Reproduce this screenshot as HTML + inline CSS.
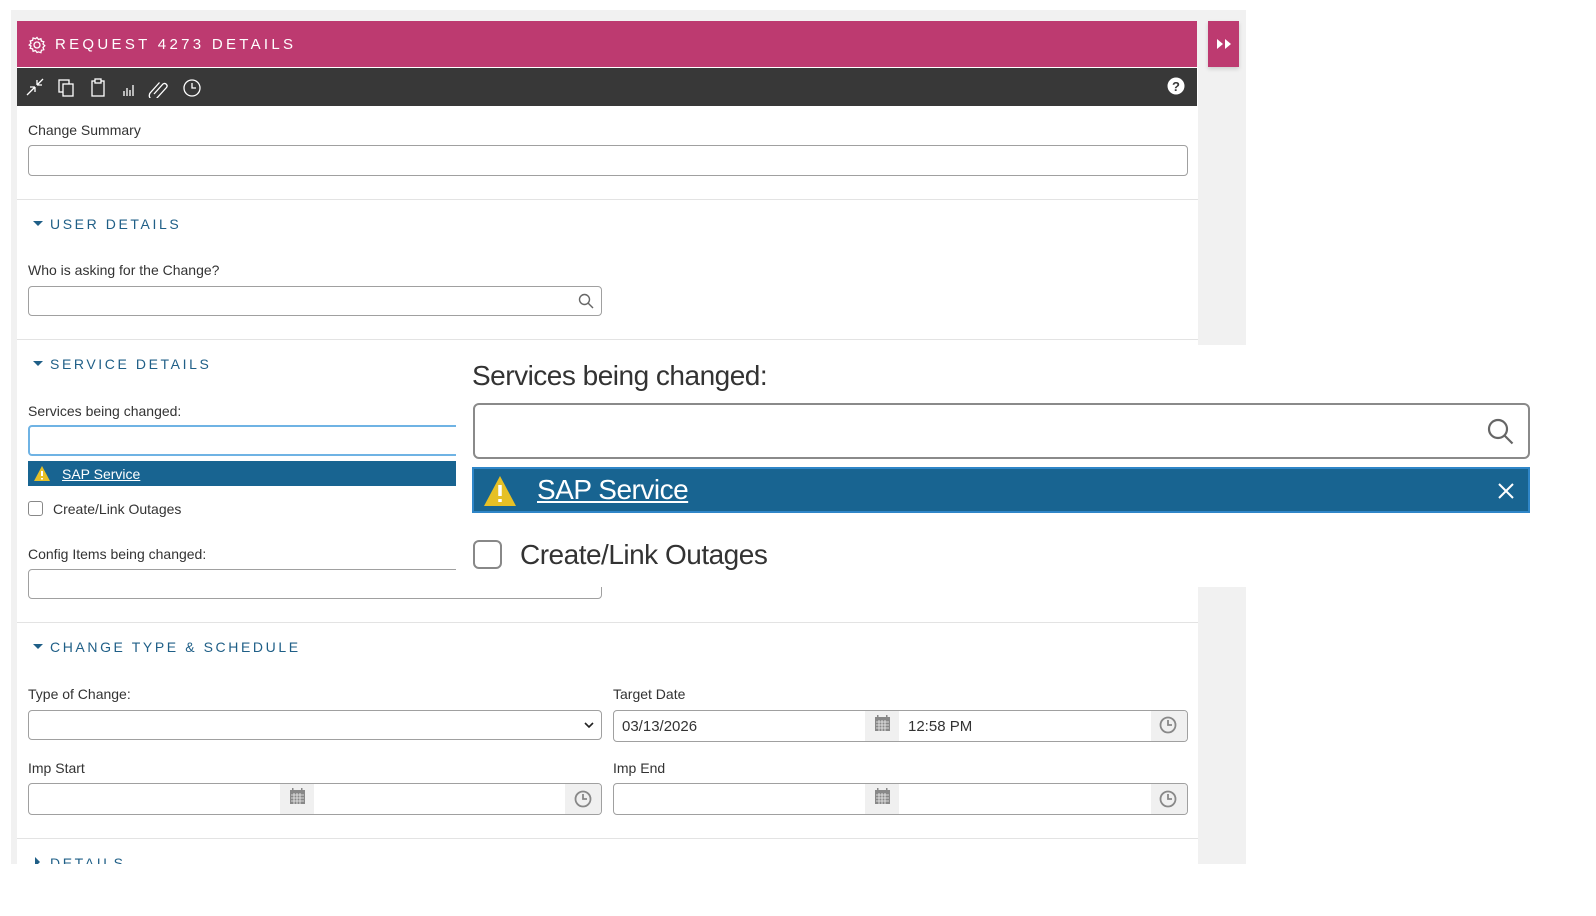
<!DOCTYPE html>
<html><head><meta charset="utf-8"><style>
*{box-sizing:border-box;margin:0;padding:0}
body{width:1596px;height:916px;background:#fff;position:relative;overflow:hidden;font-family:"Liberation Sans",sans-serif;color:#333}
.a{position:absolute}
.lbl{position:absolute;font-size:14px;color:#333;line-height:16px}
.inp{position:absolute;border:1px solid #a0a0a0;border-radius:4px;background:#fff}
.sec{position:absolute;font-size:14px;letter-spacing:2.6px;color:#1f5f87;line-height:16px}
.sec:before{content:"";display:inline-block;width:0;height:0;border-left:5px solid transparent;border-right:5px solid transparent;border-top:5px solid #1f5f87;margin-right:7px;vertical-align:3px;margin-left:5px}
.sec.col:before{border-top:5px solid transparent;border-bottom:5px solid transparent;border-left:5px solid #1f5f87;border-right:0;vertical-align:1px;margin-left:7px;margin-right:10px}
.sep{position:absolute;left:17px;width:1181px;height:1px;background:#e3e3e3}
.add{position:absolute;top:0;bottom:0;background:#f0f0f0}
</style></head><body>
<div class="a" style="left:11px;top:10px;width:1235px;height:854px;background:#f1f1f1"></div>
<div class="a" style="left:17px;top:67px;width:1181px;height:797px;background:#fff"></div>
<div class="a" style="left:17px;top:21px;width:1180px;height:46px;background:#bd3a70"></div>
<svg class="a" style="left:28px;top:36px" width="18" height="18" viewBox="0 0 18 18" fill="none" stroke="#fff" stroke-width="1.3"><circle cx="9" cy="9" r="3"/><path d="M9 1.5l1.5 2 2.4-.8.5 2.4 2.4.6-.8 2.3 1.8 1.7-1.8 1.7.8 2.3-2.4.6-.5 2.4-2.4-.8L9 16.5l-1.5-2-2.4.8-.5-2.4-2.4-.6.8-2.3L1.2 9l1.8-1.7-.8-2.3 2.4-.6.5-2.4 2.4.8z"/></svg>
<div class="a" style="left:55px;top:36px;color:#fff;font-size:15px;letter-spacing:3.3px;line-height:17px">REQUEST 4273 DETAILS</div>
<div class="a" style="left:1208px;top:21px;width:31px;height:46px;background:#bd3a70;box-shadow:0 2px 4px rgba(0,0,0,.15)"></div>
<svg class="a" style="left:1215px;top:38px" width="18" height="12"><path d="M2 1l6 5-6 5z M10 1l6 5-6 5z" fill="#fff"/></svg>
<div class="a" style="left:17px;top:68px;width:1180px;height:38px;background:#383838"></div>
<svg class="a" style="left:25px;top:76px" width="190" height="22" fill="none" stroke="#fff" stroke-width="1.3">
<path d="M2 19l8-8M10 11v5M10 11h-5M18 3l-6 6M12 9v-5M12 9h5"/>
<rect x="34" y="4" width="10" height="12"/><rect x="38" y="8" width="10" height="12" fill="#383838"/>
<rect x="67" y="5" width="12" height="15"/><rect x="70" y="3" width="6" height="4" fill="#383838"/>
<path d="M99 20v-5M102 20v-8M105 20v-6M108 20v-11"/>
<path d="M129 18l9-10a2.5 2.5 0 0 1 3.5 3.5l-10 11a4 4 0 0 1-6-6l9-10"/>
<circle cx="167" cy="12" r="8"/><path d="M167 7v5h4"/>
</svg>
<svg class="a" style="left:1167px;top:77px" width="18" height="18"><circle cx="9" cy="9" r="8.5" fill="#fff"/><text x="9" y="14" font-size="13" font-weight="bold" text-anchor="middle" fill="#383838" font-family="Liberation Sans">?</text></svg>

<div class="lbl" style="left:28px;top:122px">Change Summary</div>
<div class="inp" style="left:28px;top:145px;width:1160px;height:31px"></div>
<div class="sep" style="top:199px"></div>
<div class="sec" style="left:28px;top:216px">USER DETAILS</div>
<div class="lbl" style="left:28px;top:262px">Who is asking for the Change?</div>
<div class="inp" style="left:28px;top:286px;width:574px;height:30px"></div>
<svg class="a" style="left:578px;top:293px" width="16" height="16" fill="none" stroke="#666" stroke-width="1.4"><circle cx="6.5" cy="6.5" r="5"/><path d="M10 10l5 5"/></svg>
<div class="sep" style="top:339px"></div>
<div class="sec" style="left:28px;top:356px">SERVICE DETAILS</div>
<div class="lbl" style="left:28px;top:403px">Services being changed:</div>
<div class="inp" style="left:28px;top:425px;width:440px;height:31px;border:2px solid #6fb3e4"></div>
<div class="a" style="left:28px;top:461px;width:440px;height:25px;background:#186491"></div>
<svg class="a" style="left:33px;top:465px" width="18" height="17"><path d="M9 1l8 15H1z" fill="#e6c026"/><path d="M9 6v5M9 13v1.5" stroke="#fff" stroke-width="2"/></svg>
<div class="a" style="left:62px;top:466px;color:#fff;font-size:14px;text-decoration:underline;line-height:16px">SAP Service</div>
<div class="a" style="left:28px;top:501px;width:15px;height:15px;border:1px solid #888;border-radius:3px"></div>
<div class="lbl" style="left:53px;top:501px">Create/Link Outages</div>
<div class="lbl" style="left:28px;top:546px">Config Items being changed:</div>
<div class="inp" style="left:28px;top:569px;width:574px;height:30px"></div>
<div class="sep" style="top:622px"></div>
<div class="sec" style="left:28px;top:639px">CHANGE TYPE &amp; SCHEDULE</div>
<div class="lbl" style="left:28px;top:686px">Type of Change:</div>
<div class="inp" style="left:28px;top:710px;width:574px;height:30px"></div>
<svg class="a" style="left:584px;top:721px" width="10" height="8"><path d="M1 2l4 4 4-4" stroke="#222" stroke-width="1.6" fill="none"/></svg>
<div class="lbl" style="left:613px;top:686px">Target Date</div>
<div class="inp" style="left:613px;top:710px;width:575px;height:32px;overflow:hidden">
<div class="add" style="left:251px;width:34px"></div><div class="add" style="left:537px;width:36px"></div>
<div class="a" style="left:8px;top:7px;font-size:15px">03/13/2026</div><div class="a" style="left:294px;top:7px;font-size:15px">12:58 PM</div></div>
<div class="lbl" style="left:28px;top:760px">Imp Start</div>
<div class="inp" style="left:28px;top:783px;width:574px;height:32px;overflow:hidden"><div class="add" style="left:251px;width:34px"></div><div class="add" style="left:536px;width:36px"></div></div>
<div class="lbl" style="left:613px;top:760px">Imp End</div>
<div class="inp" style="left:613px;top:783px;width:575px;height:32px;overflow:hidden"><div class="add" style="left:251px;width:34px"></div><div class="add" style="left:537px;width:36px"></div></div>
<svg class="a" style="left:0;top:700px" width="1200" height="120" fill="#888">
<g id="c"><rect x="875" y="17" width="15" height="14"/><rect x="877" y="15" width="1.5" height="3"/><rect x="886" y="15" width="1.5" height="3"/><path d="M876 22h13M876 25h13M876 28h13M879 20v11M882 20v11M885 20v11" stroke="#f0f0f0" stroke-width=".8"/></g>
<use href="#c" x="0" y="73"/><use href="#c" x="-585" y="73"/>
<g fill="none" stroke="#888" stroke-width="1.8"><circle cx="1168" cy="25" r="7.5"/><path d="M1168 20v5h4"/><circle cx="1168" cy="99" r="7.5"/><path d="M1168 94v5h4"/><circle cx="583" cy="99" r="7.5"/><path d="M583 94v5h4"/></g>
</svg>
<div class="sep" style="top:838px"></div>
<div class="a" style="left:17px;top:853px;width:1181px;height:11px;overflow:hidden"><div class="sec col" style="left:11px;top:2px">DETAILS</div></div>

<div class="a" style="left:456px;top:345px;width:1100px;height:242px;background:#fff"></div>
<div class="a" style="left:472px;top:360px;font-size:28px;color:#333;line-height:32px;letter-spacing:-.5px">Services being changed:</div>
<div class="a" style="left:473px;top:403px;width:1057px;height:56px;border:2px solid #8a8a8a;border-radius:6px"></div>
<svg class="a" style="left:1486px;top:417px" width="30" height="30" fill="none" stroke="#666" stroke-width="2.2"><circle cx="12" cy="12" r="9"/><path d="M18.5 18.5l8 8"/></svg>
<div class="a" style="left:472px;top:467px;width:1058px;height:46px;background:#186491;border:2px solid #2f86c8"></div>
<div class="a" style="left:474px;top:469px;width:54px;height:42px;background:#186491"></div>
<svg class="a" style="left:482px;top:474px" width="36" height="34"><path d="M18 2l16 30H2z" fill="#e6c026"/><path d="M18 11v11M18 25v3" stroke="#fff" stroke-width="3.5"/></svg>
<div class="a" style="left:537px;top:474px;color:#fff;font-size:28px;text-decoration:underline;line-height:32px;letter-spacing:-.5px">SAP Service</div>
<svg class="a" style="left:1497px;top:482px" width="18" height="18"><path d="M2 2l14 14M16 2L2 16" stroke="#fff" stroke-width="2"/></svg>
<div class="a" style="left:473px;top:540px;width:29px;height:29px;border:2px solid #888;border-radius:6px"></div>
<div class="a" style="left:520px;top:539px;font-size:28px;color:#333;line-height:32px;letter-spacing:-.5px">Create/Link Outages</div>
</body></html>
